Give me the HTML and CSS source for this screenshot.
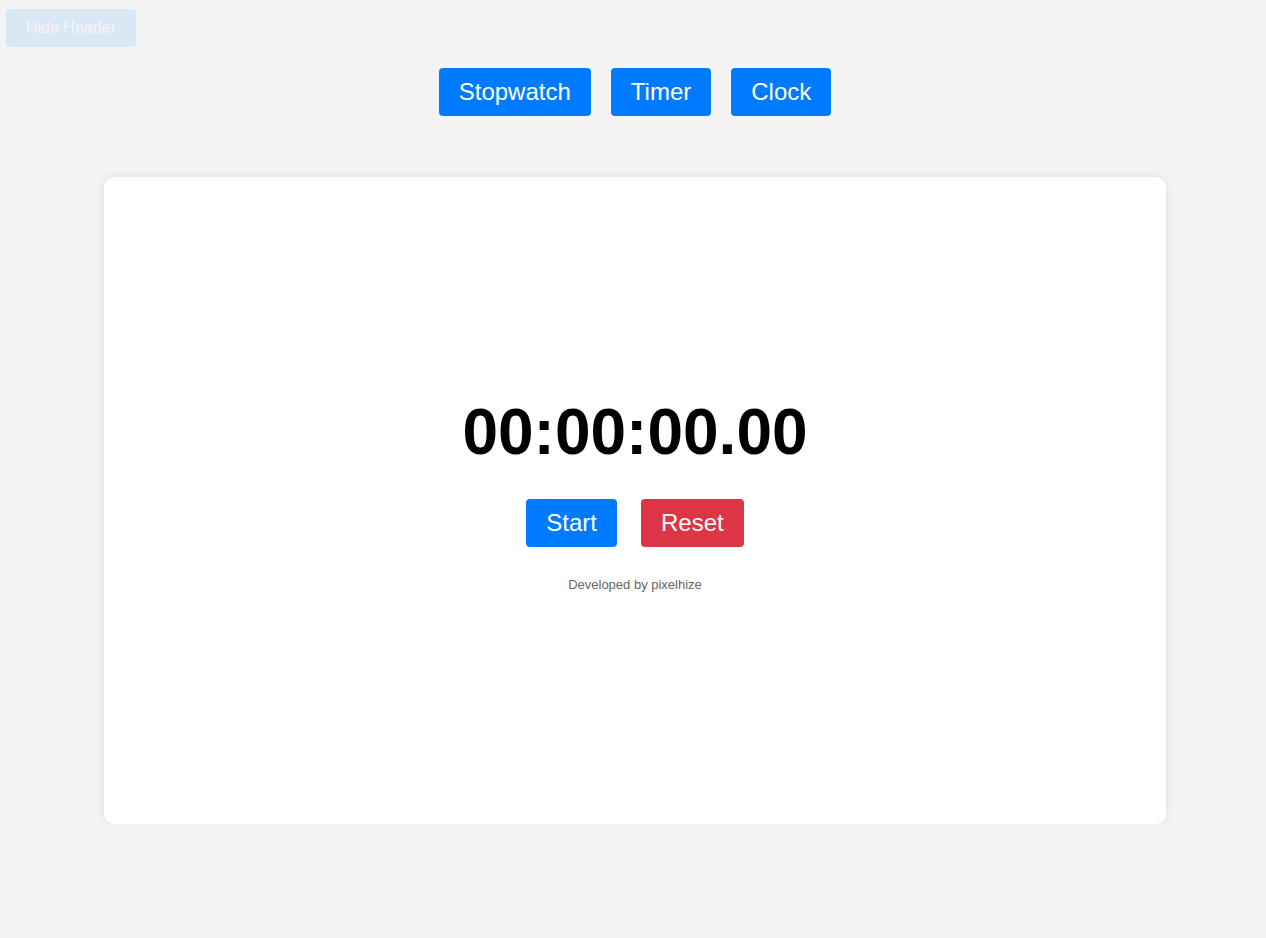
FILE: index.html
```html
<!DOCTYPE html>
<html lang="en">
<head>
  <meta charset="UTF-8">
  <title>Stopwatch</title>
  <link rel="stylesheet" href="styles.css">
</head>
<body>
  <button class="hide-btn" id="hideHeader">Hide Header</button>

  <div class="page">
    <nav class="mode-nav" id="header">
      <button class="btn btn-blue">Stopwatch</button>
      <button class="btn btn-blue">Timer</button>
      <button class="btn btn-blue">Clock</button>
    </nav>

    <div class="card">
      <div class="display" id="display">00:00:00.00</div>
      <div class="controls">
        <button class="btn btn-blue" id="startBtn">Start</button>
        <button class="btn btn-red" id="resetBtn">Reset</button>
      </div>
      <p class="credit">Developed by pixelhize</p>
    </div>
  </div>
</body>
</html>
```

FILE: styles.css
```css
body {
  margin: 0;
  font-family: 'Liberation Sans', Arial, sans-serif;
  background-color: #f4f4f4;
}

.hide-btn {
  position: absolute;
  top: 9px;
  left: 6px;
  padding: 10px 20px;
  font-family: inherit;
  font-size: 16px;
  color: #fff;
  background-color: #007bff;
  border: none;
  border-radius: 4px;
  opacity: 0.1;
  cursor: pointer;
}

.page {
  padding-left: 4px;
}

.mode-nav {
  display: flex;
  justify-content: center;
  gap: 20px;
  padding-top: 68px;
}

.btn {
  padding: 10px 20px;
  font-family: inherit;
  font-size: 24px;
  color: #fff;
  border: none;
  border-radius: 4px;
  cursor: pointer;
}

.btn-blue {
  background-color: #007bff;
}

.btn-red {
  background-color: #dc3545;
}

.card {
  width: 1062px;
  height: 647px;
  margin: 61px auto 0;
  background-color: #fff;
  border-radius: 10px;
  box-shadow: 0 0 10px rgba(0, 0, 0, 0.1);
  display: flex;
  flex-direction: column;
  justify-content: center;
  align-items: center;
  box-sizing: border-box;
  padding-bottom: 14px;
}

.display {
  font-size: 64px;
  font-weight: bold;
  color: #000;
}

.controls {
  display: flex;
  gap: 24px;
  margin-top: 30px;
}

.credit {
  margin: 30px 0 0;
  font-size: 13px;
  color: #666;
}
```
